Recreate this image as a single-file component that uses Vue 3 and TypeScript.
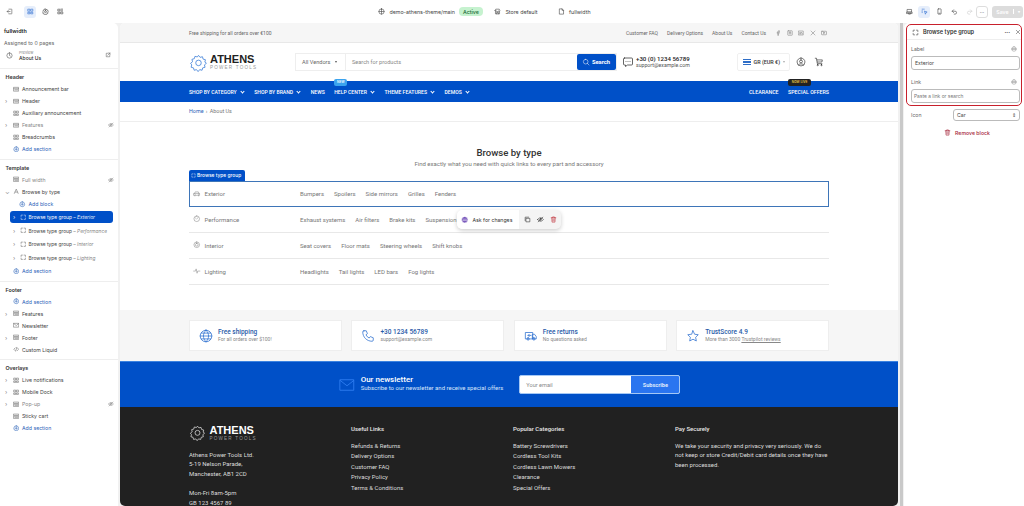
<script setup lang="ts">
type Kind = 'section' | 'add' | 'addBlock' | 'group' | 'open'

interface Row {
  label: string
  icon: string
  kind?: Kind
  chev?: boolean
  hidden?: boolean
  note?: string
  active?: boolean
  muted?: boolean
}

const icons: Record<string, string> = {
  exit: 'M10 4h9a1 1 0 0 1 1 1v14a1 1 0 0 1-1 1h-9M14 12H4M8 8l-4 4 4 4',
  sections: 'M4 4h6v7H4zM14 4h6v7h-6zM4 15h6v5H4zM14 15h6v5h-6z',
  gear: 'M12 3l2 2.5 3-.8.8 3 3 .8-.8 3L22 13l-2.500 2 .8 3-3 .8-.8 3-3-.8-2 2.500-2-2.500-3 .8-.8-3-3-.8.8-3L2 13l2.500-2-.8-3 3-.8.8-3 3 .8zM12 9a3.500 3.500 0 1 0 0 7 3.500 3.500 0 0 0 0-7z',
  apps: 'M4 4h6v6H4zM4 14h6v6H4zM14 14h6v6h-6zM14 3v8M18 3v8',
  theme: 'M12 3a9 9 0 1 0 0 18 9 9 0 0 0 0-18zM12 3v18M3 12h18',
  store: 'M4 9l2-5h12l2 5a3 3 0 0 1-5 1 3 3 0 0 1-6 0 3 3 0 0 1-5-1zM5 12v8h14v-8M9 20v-5h6v5',
  page: 'M6 3h8l5 5v13H6zM14 3v5h5',
  desktop: 'M5 5h14v9H5zM3 14h18v5H3zM9 19v2h6v-2',
  select: 'M4 4h2M9 4h2M4 9v2M4 14v2M13 11l8 3-4 1.500L15.500 20z',
  mobile: 'M8 3h8a1.500 1.500 0 0 1 1.500 1.500v15A1.500 1.500 0 0 1 16 21H8a1.500 1.500 0 0 1-1.500-1.500v-15A1.500 1.500 0 0 1 8 3zM10 18h4',
  undo: 'M9 6L4 11l5 5M4 11h10a5 5 0 0 1 0 10h-3',
  redo: 'M15 6l5 5-5 5M20 11H10a5 5 0 0 0 0 10h3',
  clock: 'M12 3a9 9 0 1 0 0 18 9 9 0 0 0 0-18zM12 7v5l3 2',
  external: 'M11 5H5v14h14v-6M14 4h6v6M20 4l-9 9',
  bar: 'M3 5h18v14H3zM3 10h18M7 14h10',
  stack: 'M3 4h18v5H3zM3 12h18v8H3zM7 16h10',
  type: 'M5 20L12 4l7 16M8 15h8',
  plus: 'M12 3a9 9 0 1 0 0 18 9 9 0 0 0 0-18zM12 8v8M8 12h8',
  corners: 'M4 9V4h5M15 4h5v5M20 15v5h-5M9 20H4v-5',
  code: 'M8 7l-5 5 5 5M16 7l5 5-5 5M14 5l-4 14',
  mail: 'M3 5h18v14H3zM3 6l9 7 9-7',
  eyeOff: 'M2 12s4-6 10-6 10 6 10 6-4 6-10 6-10-6-10-6zM12 9a3 3 0 1 0 0 6 3 3 0 0 0 0-6zM4 20L20 4',
  chat: 'M5 4h14a2 2 0 0 1 2 2v10a2 2 0 0 1-2 2h-8l-4 3v-3H5a2 2 0 0 1-2-2V6a2 2 0 0 1 2-2zM8 11h.01M12 11h.01M16 11h.01',
  search: 'M11 4a7 7 0 1 0 0 14 7 7 0 0 0 0-14zM21 21l-5-5',
  user: 'M12 2.500a9.500 9.500 0 1 0 0 19 9.500 9.500 0 0 0 0-19zM12 7a3.500 3.500 0 1 0 0 7 3.500 3.500 0 0 0 0-7zM6 18.500c1.500-3 10.500-3 12 0',
  cart: 'M3 3h3l2 13h11M7 7h13l-1 5H8M9 18a1.500 1.500 0 1 0 0 3 1.500 1.500 0 0 0 0-3zM18 18a1.500 1.500 0 1 0 0 3 1.500 1.500 0 0 0 0-3z',
  car: 'M5 11l2-5h10l2 5M3 11h18v6H3zM6 17v2M18 17v2M7 14h.01M17 14h.01',
  gauge: 'M12 3a9 9 0 1 0 0 18 9 9 0 0 0 0-18zM12 13l4-5M7 9l1.500 1',
  ring: 'M12 3a9 9 0 1 0 0 18 9 9 0 0 0 0-18zM12 7.500a4.500 4.500 0 1 0 0 9 4.500 4.500 0 0 0 0-9z',
  spark: 'M2 13h6l2-7 3 14 2-7h7',
  copy: 'M8 8h12v12H8zM4 16V4h12',
  trash: 'M4 6h16M9 6V3h6v3M6 6l1 15h10l1-15M10 10v7M14 10v7',
  bot: 'M12 2a10 10 0 1 0 0 20 10 10 0 0 0 0-20zM5 10h14M5 15h14',
  globe: 'M12 2a10 10 0 1 0 0 20 10 10 0 0 0 0-20zM2 12h20M12 2c6 6 6 14 0 20M12 2c-6 6-6 14 0 20M4 7h16M4 17h16',
  phone: 'M5 3h4l2 5-2.500 2a12 12 0 0 0 5.500 5.500l2-2.500 5 2v4a2 2 0 0 1-2 2C10 21 3 14 3 5a2 2 0 0 1 2-2z',
  van: 'M3 6h12v11H3zM15 9h3l3 4v4h-6zM7 15a2 2 0 1 0 0 4 2 2 0 0 0 0-4zM17 15a2 2 0 1 0 0 4 2 2 0 0 0 0-4zM7 11h5M9 9l-2 2 2 2',
  star: 'M12 3l2.800 6 6.200.8-4.500 4.400 1.200 6.300L12 17.500 6.300 20.500l1.200-6.300L3 9.800 9.200 9z',
  close: 'M5 5l14 14M19 5L5 19',
  db: 'M12 3a9 9 0 1 0 0 18 9 9 0 0 0 0-18zM4 10h16M4 14h16',
  facebook: 'M14 21v-8h3l.5-3H14V8c0-1 .5-2 2-2h2V3h-3c-3 0-4 2-4 4v3H8v3h3v8',
  instagram: 'M5 3h14a2 2 0 0 1 2 2v14a2 2 0 0 1-2 2H5a2 2 0 0 1-2-2V5a2 2 0 0 1 2-2zM12 8a4 4 0 1 0 0 8 4 4 0 0 0 0-8z',
  linkedin: 'M3 4h18v16H3zM7 10v6M11 16v-6M11 12c2-3 6-2 6 1v3',
  x: 'M4 4l16 16M20 4L4 20',
  youtube: 'M4 5h16a2 2 0 0 1 2 2v10a2 2 0 0 1-2 2H4a2 2 0 0 1-2-2V7a2 2 0 0 1 2-2zM10 9v6l5-3z',
}

const sidebar: { title: string; rows: Row[] }[] = [
  {
    title: 'Header',
    rows: [
      { label: 'Announcement bar', icon: 'bar' },
      { label: 'Header', icon: 'bar', chev: true },
      { label: 'Auxiliary announcement', icon: 'sections' },
      { label: 'Features', icon: 'bar', chev: true, hidden: true, muted: true },
      { label: 'Breadcrumbs', icon: 'sections' },
      { label: 'Add section', icon: 'plus', kind: 'add' },
    ],
  },
  {
    title: 'Template',
    rows: [
      { label: 'Full width', icon: 'stack', hidden: true, muted: true },
      { label: 'Browse by type', icon: 'type', kind: 'open' },
      { label: 'Add block', icon: 'plus', kind: 'addBlock' },
      { label: 'Browse type group', note: 'Exterior', icon: 'corners', kind: 'group', chev: true, active: true },
      { label: 'Browse type group', note: 'Performance', icon: 'corners', kind: 'group', chev: true },
      { label: 'Browse type group', note: 'Interior', icon: 'corners', kind: 'group', chev: true },
      { label: 'Browse type group', note: 'Lighting', icon: 'corners', kind: 'group', chev: true },
      { label: 'Add section', icon: 'plus', kind: 'add' },
    ],
  },
  {
    title: 'Footer',
    rows: [
      { label: 'Add section', icon: 'plus', kind: 'add' },
      { label: 'Features', icon: 'stack', chev: true },
      { label: 'Newsletter', icon: 'mail' },
      { label: 'Footer', icon: 'stack', chev: true },
      { label: 'Custom Liquid', icon: 'code' },
    ],
  },
  {
    title: 'Overlays',
    rows: [
      { label: 'Live notifications', icon: 'sections', chev: true },
      { label: 'Mobile Dock', icon: 'sections', chev: true },
      { label: 'Pop-up', icon: 'stack', chev: true, hidden: true, muted: true },
      { label: 'Sticky cart', icon: 'stack' },
      { label: 'Add section', icon: 'plus', kind: 'add' },
    ],
  },
]

const topLinks = ['Customer FAQ', 'Delivery Options', 'About Us', 'Contact Us']
const socials = ['facebook', 'instagram', 'linkedin', 'x', 'youtube']
const nav = [
  { label: 'SHOP BY CATEGORY', chev: true },
  { label: 'SHOP BY BRAND', chev: true },
  { label: 'NEWS', chev: false },
  { label: 'HELP CENTER', chev: true, badge: true },
  { label: 'THEME FEATURES', chev: true },
  { label: 'DEMOS', chev: true },
]

const types = [
  { name: 'Exterior', icon: 'car', links: ['Bumpers', 'Spoilers', 'Side mirrors', 'Grilles', 'Fenders'], selected: true },
  { name: 'Performance', icon: 'gauge', links: ['Exhaust systems', 'Air filters', 'Brake kits', 'Suspension'] },
  { name: 'Interior', icon: 'ring', links: ['Seat covers', 'Floor mats', 'Steering wheels', 'Shift knobs'] },
  { name: 'Lighting', icon: 'spark', links: ['Headlights', 'Tail lights', 'LED bars', 'Fog lights'] },
]

const features = [
  { icon: 'globe', title: 'Free shipping', sub: 'For all orders over $100!' },
  { icon: 'phone', title: '+30 1234 56789', sub: 'support@example.com' },
  { icon: 'van', title: 'Free returns', sub: 'No questions asked' },
  { icon: 'star', title: 'TrustScore 4.9', sub: 'More than 3000', link: 'Trustpilot reviews' },
]

const usefulLinks = ['Refunds & Returns', 'Delivery Options', 'Customer FAQ', 'Privacy Policy', 'Terms & Conditions']
const categories = ['Battery Screwdrivers', 'Cordless Tool Kits', 'Cordless Lawn Mowers', 'Clearance', 'Special Offers']
</script>

<template>
  <div class="app">
    <header class="topbar">
      <div class="top-left">
        <svg class="ic tb-exit" viewBox="0 0 24 24"><path :d="icons.exit" /></svg>
        <span class="tb-btn on"><svg class="ic" viewBox="0 0 24 24"><path :d="icons.sections" /></svg></span>
        <span class="tb-btn"><svg class="ic" viewBox="0 0 24 24"><path :d="icons.gear" /></svg></span>
        <span class="tb-btn"><svg class="ic" viewBox="0 0 24 24"><path :d="icons.apps" /></svg></span>
      </div>
      <div class="top-center">
        <svg class="ic" viewBox="0 0 24 24"><path :d="icons.theme" /></svg>
        <span class="theme-name">demo-athens-theme/main</span>
        <span class="pill">Active</span>
        <svg class="ic store-ic" viewBox="0 0 24 24"><path :d="icons.store" /></svg>
        <span>Store default</span>
        <svg class="ic page-ic" viewBox="0 0 24 24"><path :d="icons.page" /></svg>
        <span>fullwidth</span>
      </div>
      <div class="top-right">
        <span class="tb-btn"><svg class="ic" viewBox="0 0 24 24"><path :d="icons.desktop" /></svg></span>
        <span class="tb-btn on"><svg class="ic" viewBox="0 0 24 24"><path :d="icons.select" /></svg></span>
        <span class="tb-btn"><svg class="ic" viewBox="0 0 24 24"><path :d="icons.mobile" /></svg></span>
        <span class="tb-btn"><svg class="ic" viewBox="0 0 24 24"><path :d="icons.undo" /></svg></span>
        <span class="tb-btn faded"><svg class="ic" viewBox="0 0 24 24"><path :d="icons.redo" /></svg></span>
        <span class="more">···</span>
        <span class="save"><span class="save-label">Save</span><span class="save-caret">▾</span></span>
      </div>
    </header>

    <div class="workspace">
      <aside class="left">
        <div class="left-head">
          <div class="tpl-name">fullwidth</div>
          <div class="tpl-sub">Assigned to 0 pages</div>
          <div class="preview-row">
            <svg class="ic" viewBox="0 0 24 24"><path :d="icons.clock" /></svg>
            <div class="preview-text">
              <small>Preview</small>
              <b>About Us</b>
            </div>
            <svg class="ic ext" viewBox="0 0 24 24"><path :d="icons.external" /></svg>
          </div>
        </div>
        <section v-for="sec in sidebar" :key="sec.title" class="side-sec">
          <h4>{{ sec.title }}</h4>
          <div
            v-for="(row, i) in sec.rows"
            :key="i"
            class="side-row"
            :class="[row.kind, { active: row.active, muted: row.muted }]"
          >
            <span class="chev"><template v-if="row.chev">›</template><template v-else-if="row.kind === 'open'">⌄</template></span>
            <svg class="ic" viewBox="0 0 24 24"><path :d="icons[row.icon]" /></svg>
            <span class="row-label">{{ row.label }}<em v-if="row.note"> – {{ row.note }}</em></span>
            <svg v-if="row.hidden" class="ic eye" viewBox="0 0 24 24"><path :d="icons.eyeOff" /></svg>
          </div>
        </section>
      </aside>

      <main class="preview">
        <div class="announce">
          <div class="wrap announce-in">
            <span>Free shipping for all orders over €100</span>
            <div class="announce-right">
              <span v-for="l in topLinks" :key="l">{{ l }}</span>
              <span class="socials">
                <svg v-for="s in socials" :key="s" class="ic" viewBox="0 0 24 24"><path :d="icons[s]" /></svg>
              </span>
            </div>
          </div>
        </div>

        <div class="site-head">
          <div class="wrap head-in">
            <div class="logo">
              <svg class="logo-gear" viewBox="0 0 24 24"><path :d="icons.gear" /></svg>
              <div>
                <div class="logo-name">ATHENS</div>
                <div class="logo-sub">POWER TOOLS</div>
              </div>
            </div>
            <div class="search">
              <div class="vendors">All Vendors <i class="caret"></i></div>
              <span class="search-ph">Search for products</span>
              <span class="search-btn">
                <svg class="ic" viewBox="0 0 24 24"><path :d="icons.search" /></svg>
                Search
              </span>
            </div>
            <svg class="ic chat" viewBox="0 0 24 24"><path :d="icons.chat" /></svg>
            <div class="contact">
              <b>+30 (0) 1234 56789</b>
              <span>support@example.com</span>
            </div>
            <div class="currency">
              <span class="flag"></span>
              <span>GR (EUR €)</span>
              <i class="caret small"></i>
            </div>
            <svg class="ic head-ic" viewBox="0 0 24 24"><path :d="icons.user" /></svg>
            <svg class="ic head-ic" viewBox="0 0 24 24"><path :d="icons.cart" /></svg>
          </div>
        </div>

        <nav class="site-nav">
          <div class="wrap nav-in">
            <span v-for="n in nav" :key="n.label" class="nav-item">
              {{ n.label }}<i v-if="n.chev" class="nav-chev"></i>
              <span v-if="n.badge" class="badge-new">NEW</span>
            </span>
            <span class="nav-spacer"></span>
            <span class="nav-item nav-end">CLEARANCE</span>
            <span class="nav-item nav-end">SPECIAL OFFERS<span class="badge-live">NOW LIVE</span></span>
          </div>
        </nav>

        <div class="crumbs">
          <div class="wrap"><a>Home</a> <span class="sep">›</span> About Us</div>
        </div>

        <section class="browse">
          <div class="wrap">
            <h2>Browse by type</h2>
            <p class="browse-sub">Find exactly what you need with quick links to every part and accessory</p>
            <div class="type-list">
              <div v-for="t in types" :key="t.name" class="type-row" :class="{ selected: t.selected }">
                <span v-if="t.selected" class="sel-tag">
                  <svg class="ic" viewBox="0 0 24 24"><path :d="icons.corners" /></svg>Browse type group
                </span>
                <div class="type-name">
                  <svg class="ic" viewBox="0 0 24 24"><path :d="icons[t.icon]" /></svg>
                  {{ t.name }}
                </div>
                <div class="type-links">
                  <span v-for="l in t.links" :key="l">{{ l }}</span>
                </div>
              </div>
              <div class="float-bar">
                <div class="ask">
                  <svg class="bot" viewBox="0 0 24 24"><path :d="icons.bot" /></svg>
                  Ask for changes
                </div>
                <div class="float-actions">
                  <svg class="ic" viewBox="0 0 24 24"><path :d="icons.copy" /></svg>
                  <svg class="ic" viewBox="0 0 24 24"><path :d="icons.eyeOff" /></svg>
                  <svg class="ic red" viewBox="0 0 24 24"><path :d="icons.trash" /></svg>
                </div>
              </div>
            </div>
          </div>
        </section>

        <section class="features">
          <div class="wrap feature-grid">
            <div v-for="f in features" :key="f.title" class="feature">
              <svg class="ic" viewBox="0 0 24 24"><path :d="icons[f.icon]" /></svg>
              <div>
                <b>{{ f.title }}</b>
                <span>{{ f.sub }} <u v-if="f.link">{{ f.link }}</u></span>
              </div>
            </div>
          </div>
        </section>

        <section class="newsletter">
          <svg class="ic news-ic" viewBox="0 0 24 24"><path :d="icons.mail" /></svg>
          <div class="news-text">
            <b>Our newsletter</b>
            <span>Subscribe to our newsletter and receive special offers</span>
          </div>
          <div class="news-form">
            <span class="news-ph">Your email</span>
            <span class="news-btn">Subscribe</span>
          </div>
        </section>

        <footer class="site-foot">
          <div class="wrap foot-grid">
            <div>
              <div class="logo foot-logo">
                <svg class="logo-gear" viewBox="0 0 24 24"><path :d="icons.gear" /></svg>
                <div>
                  <div class="logo-name">ATHENS</div>
                  <div class="logo-sub">POWER TOOLS</div>
                </div>
              </div>
              <p class="addr">Athens Power Tools Ltd.<br />5-19 Nelson Parade,<br />Manchester, AB1 2CD</p>
              <p class="addr">Mon-Fri 8am-5pm<br />GB 123 4567 89</p>
            </div>
            <div>
              <h5>Useful Links</h5>
              <a v-for="l in usefulLinks" :key="l">{{ l }}</a>
            </div>
            <div>
              <h5>Popular Categories</h5>
              <a v-for="l in categories" :key="l">{{ l }}</a>
            </div>
            <div>
              <h5>Pay Securely</h5>
              <p class="pay">We take your security and privacy very seriously. We do not keep or store Credit/Debit card details once they have been processed.</p>
            </div>
          </div>
        </footer>
      </main>

      <div class="scroll-track"><span></span></div>

      <aside class="right">
        <div class="outlined">
          <div class="panel-title">
            <svg class="ic" viewBox="0 0 24 24"><path :d="icons.corners" /></svg>
            <b>Browse type group</b>
            <span class="dots">···</span>
            <svg class="ic close" viewBox="0 0 24 24"><path :d="icons.close" /></svg>
          </div>
          <div class="field">
            <div class="field-label">Label<svg class="ic" viewBox="0 0 24 24"><path :d="icons.db" /></svg></div>
            <div class="input">Exterior</div>
          </div>
          <div class="field">
            <div class="field-label">Link<svg class="ic" viewBox="0 0 24 24"><path :d="icons.db" /></svg></div>
            <div class="input link">Paste a link or search</div>
          </div>
        </div>
        <div class="icon-row">
          <span>Icon</span>
          <div class="select">Car<span class="updown">⇕</span></div>
        </div>
        <div class="remove">
          <svg class="ic" viewBox="0 0 24 24"><path :d="icons.trash" /></svg>
          Remove block
        </div>
      </aside>
    </div>
  </div>
</template>

<style>
html,
body {
  margin: 0;
  background: #f1f1f1;
  overflow: hidden;
}
</style>

<style scoped>
.app {
  width: 1024px;
  height: 506px;
  display: flex;
  flex-direction: column;
  overflow: hidden;
  font-family: Inter, 'Liberation Sans', sans-serif;
  color: #333;
  font-size: 5.2px;
}

.ic {
  width: 7px;
  height: 7px;
  flex-shrink: 0;
  fill: none;
  stroke: currentColor;
  stroke-width: 2;
  stroke-linecap: round;
  stroke-linejoin: round;
}

/* top bar */
.topbar {
  height: 23px;
  flex-shrink: 0;
  background: #fff;
  display: grid;
  grid-template-columns: 1fr auto 1fr;
  align-items: center;
  padding: 0 1px 0 6px;
  box-sizing: border-box;
}

.top-left {
  display: flex;
  align-items: center;
  gap: 3px;
}

.tb-exit {
  margin-right: 8px;
  color: #555;
}

.tb-btn {
  width: 12px;
  height: 12px;
  border-radius: 3px;
  display: flex;
  align-items: center;
  justify-content: center;
  color: #444;
}

.tb-btn.on {
  background: #e6eefb;
  color: #2a6bd0;
}

.tb-btn.faded {
  color: #ccc;
}

.top-center {
  display: flex;
  align-items: center;
  gap: 4px;
  font-size: 5.3px;
  color: #444;
  transform: translateX(-30px);
}

.pill {
  background: #c6f2cf;
  color: #226b37;
  border-radius: 4px;
  padding: 1.5px 4px;
  font-weight: 500;
}

.store-ic {
  margin-left: 7.5px;
}

.page-ic {
  margin-left: 16.5px;
}

.top-right {
  display: flex;
  justify-content: flex-end;
  align-items: center;
  gap: 3px;
}

.more {
  width: 12px;
  height: 12px;
  border: 0.5px solid #ddd;
  border-radius: 3px;
  box-sizing: border-box;
  display: flex;
  align-items: center;
  justify-content: center;
  margin: 0 1px 0 -2px;
  color: #444;
}

.save {
  width: 31px;
  height: 12px;
  background: #dcdcdc;
  border-radius: 3px;
  color: #fff;
  display: flex;
  align-items: center;
  font-weight: 600;
}

.save-label {
  flex: 1;
  text-align: center;
}

.save-caret {
  width: 9px;
  font-size: 4px;
  text-align: center;
  border-left: 0.5px solid #fff;
}

.workspace {
  flex: 1;
  display: flex;
  min-height: 0;
}

/* left sidebar */
.left {
  width: 118px;
  flex-shrink: 0;
  background: #fff;
  border-top-right-radius: 5px;
  margin-right: 2px;
}

.left-head {
  height: 45px;
  padding: 5px 4px 0;
  box-sizing: border-box;
}

.tpl-name {
  font-weight: 600;
  font-size: 5.4px;
  line-height: 7px;
  color: #222;
}

.tpl-sub {
  margin-top: 4.5px;
  font-size: 5.2px;
  line-height: 7px;
  color: #666;
}

.preview-row {
  margin-top: 3px;
  display: flex;
  align-items: center;
  gap: 6px;
  padding: 0 3px 0 2px;
  color: #555;
}

.preview-text {
  flex: 1;
  display: flex;
  flex-direction: column;
}

.preview-text small {
  font-size: 3.8px;
  line-height: 5px;
  color: #888;
}

.preview-text b {
  font-size: 5px;
  line-height: 6px;
  font-weight: 500;
  color: #333;
}

.ext {
  width: 6px;
  height: 6px;
}

.side-sec {
  border-top: 0.5px solid #eee;
  padding: 3px 0 3.5px;
}

.side-sec h4 {
  margin: 0;
  height: 11px;
  line-height: 11px;
  padding-left: 5.5px;
  font-size: 5.3px;
  font-weight: 600;
  color: #333;
}

.side-row {
  height: 12px;
  display: flex;
  align-items: center;
  color: #444;
  padding-left: 5px;
}

.chev {
  width: 7.5px;
  font-size: 6px;
  line-height: 1;
  color: #888;
  flex-shrink: 0;
}

.side-row .ic {
  margin-right: 3px;
  width: 6.5px;
  height: 6.5px;
  color: #666;
}

.row-label {
  flex: 1;
  white-space: nowrap;
}

.row-label em {
  color: #888;
}

.side-row .ic.eye {
  width: 6px;
  height: 6px;
  margin-right: 4px;
  color: #888;
}

.side-row.muted .row-label {
  color: #888;
}

.side-row.add,
.side-row.addBlock {
  color: #2b62b8;
}

.side-row.add .ic,
.side-row.addBlock .ic {
  color: #2b62b8;
}

.side-row.addBlock {
  height: 13.5px;
  padding-left: 19px;
}

.side-row.addBlock .chev {
  width: 0;
}

.side-row.group {
  height: 12px;
  margin: 0 5px 1.5px 10px;
  padding-left: 3px;
  border-radius: 3px;
  font-size: 4.85px;
}

.side-row.group .chev {
  width: 6.5px;
}

.side-row.group .ic {
  margin-right: 2.5px;
}

.side-row.active {
  background: #0050c8;
  color: #fff;
}

.side-row.active .chev,
.side-row.active .ic,
.side-row.active em {
  color: #e2ebfa;
}

/* preview */
.preview {
  width: 778px;
  flex-shrink: 0;
  background: #fff;
  font-family: Roboto, 'Liberation Sans', sans-serif;
  border-radius: 5px;
  overflow: hidden;
  display: flex;
  flex-direction: column;
}

.wrap {
  width: 640px;
  margin: 0 auto;
}

.announce {
  height: 20px;
  flex-shrink: 0;
  background: #f6f6f6;
  border-bottom: 0.5px solid #e8e8e8;
  box-sizing: border-box;
  color: #666;
  font-size: 5px;
}

.announce-in {
  height: 100%;
  display: flex;
  justify-content: space-between;
  align-items: center;
}

.announce-right {
  display: flex;
  align-items: center;
  gap: 9px;
  margin-right: 2px;
}

.socials {
  display: flex;
  gap: 5.5px;
  color: #777;
}

.socials .ic {
  width: 6px;
  height: 6px;
}

.site-head {
  height: 38px;
  flex-shrink: 0;
}

.head-in {
  height: 100%;
  display: flex;
  align-items: center;
}

.logo {
  width: 106px;
  flex-shrink: 0;
  display: flex;
  align-items: center;
  gap: 2px;
  color: #222;
}

.logo-gear {
  width: 19px;
  height: 19px;
  fill: none;
  stroke: #3b7dd8;
  stroke-width: 1;
}

.logo-name {
  font-family: 'Liberation Sans', sans-serif;
  font-weight: 700;
  font-size: 11px;
  line-height: 11px;
}

.logo-sub {
  font-family: 'Liberation Sans', sans-serif;
  font-size: 4.6px;
  line-height: 5px;
  letter-spacing: 1.2px;
  color: #999;
  white-space: nowrap;
}

.search {
  width: 322px;
  height: 18px;
  flex-shrink: 0;
  border: 0.5px solid #eee;
  box-sizing: border-box;
  display: flex;
  align-items: center;
  font-size: 5.6px;
  color: #777;
}

.vendors {
  width: 50px;
  height: 100%;
  box-sizing: border-box;
  padding-left: 6px;
  display: flex;
  align-items: center;
  gap: 4.5px;
  border-right: 0.5px solid #eee;
  color: #666;
}

.caret {
  width: 0;
  height: 0;
  border-left: 1.8px solid transparent;
  border-right: 1.8px solid transparent;
  border-top: 2px solid #555;
}

.caret.small {
  border-top-color: #aaa;
}

.search-ph {
  flex: 1;
  padding-left: 6px;
  color: #888;
}

.search-btn {
  width: 39px;
  height: 16px;
  margin-right: 0.5px;
  background: #0050c8;
  border-radius: 2px;
  color: #fff;
  font-weight: 700;
  display: flex;
  align-items: center;
  justify-content: center;
  gap: 2px;
  font-size: 5.8px;
}

.search-btn .ic {
  width: 8px;
  height: 8px;
  stroke-width: 1.500;
}

.chat {
  width: 12px;
  height: 12px;
  margin-left: 5px;
  stroke-width: 1.500;
  color: #333;
}

.contact {
  margin-left: 2px;
  flex: 1;
  display: flex;
  flex-direction: column;
  font-size: 5.2px;
  line-height: 6.5px;
  color: #555;
}

.contact b {
  font-size: 6.1px;
  line-height: 7px;
  font-weight: 500;
  color: #222;
}

.currency {
  width: 53px;
  height: 18px;
  border: 0.5px solid #f0f0f0;
  border-radius: 2px;
  box-sizing: border-box;
  display: flex;
  align-items: center;
  padding-left: 5px;
  gap: 3px;
  font-size: 5.4px;
  font-weight: 500;
  color: #333;
  margin-right: 3.5px;
}

.flag {
  width: 8px;
  height: 5.5px;
  background: repeating-linear-gradient(#2f6ec7 0 1px, #fff 1px 1.600px);
}

.head-ic {
  width: 10px;
  height: 10px;
  margin-left: 3px;
  margin-right: 5px;
  stroke-width: 1.600;
  color: #333;
}

.site-nav {
  height: 21px;
  flex-shrink: 0;
  background: #0050c8;
  color: #fff;
  font-size: 5.1px;
  font-weight: 500;
}

.nav-in {
  height: 100%;
  display: flex;
  align-items: center;
  gap: 9.5px;
}

.nav-item {
  position: relative;
  display: flex;
  align-items: center;
  white-space: nowrap;
}

.nav-end {
  font-size: 5.25px;
}

.nav-spacer {
  flex: 1;
}

.nav-chev {
  width: 2px;
  height: 2px;
  margin: -1px 1px 0 4px;
  border-right: 0.7px solid #fff;
  border-bottom: 0.7px solid #fff;
  transform: rotate(45deg);
}

.badge-new,
.badge-live {
  position: absolute;
  top: -9.5px;
  font-size: 3.4px;
  line-height: 6.5px;
  border-radius: 2px;
  text-align: center;
}

.badge-new {
  left: 0;
  width: 13px;
  background: #3ba3ee;
}

.badge-live {
  left: 0;
  width: 23px;
  background: #222;
  color: #f2cf4a;
}

.crumbs {
  height: 20px;
  flex-shrink: 0;
  border-bottom: 0.5px solid #eee;
  box-sizing: border-box;
  line-height: 19px;
  font-size: 5.4px;
  color: #777;
}

.crumbs a {
  color: #2b62b8;
}

.sep {
  margin: 0 1px;
}

.browse {
  height: 188px;
  flex-shrink: 0;
  text-align: left;
}

.browse h2 {
  margin: 24px 0 0;
  text-align: center;
  font-size: 9.6px;
  line-height: 13px;
  font-weight: 500;
  color: #333;
}

.browse-sub {
  margin: 1px 0 0;
  text-align: center;
  font-size: 6px;
  line-height: 8px;
  color: #777;
}

.type-list {
  position: relative;
  margin-top: 12.5px;
}

.type-row {
  position: relative;
  height: 26px;
  display: flex;
  align-items: center;
  border-bottom: 0.5px solid #e8e8e8;
  box-sizing: border-box;
  font-size: 6px;
  color: #777;
}

.type-row.selected {
  border: 1px solid #3e75b8;
}

.sel-tag {
  position: absolute;
  left: -1px;
  top: -12px;
  height: 11.5px;
  width: 56px;
  background: #0050c8;
  color: #fff;
  font-size: 4.9px;
  font-weight: 500;
  font-family: Inter, sans-serif;
  border-radius: 2px 2px 0 0;
  display: flex;
  align-items: center;
  gap: 1px;
  padding-left: 2px;
  box-sizing: border-box;
  white-space: nowrap;
}

.sel-tag .ic {
  width: 5px;
  height: 5px;
}

.type-name {
  width: 111px;
  padding-left: 4px;
  box-sizing: border-box;
  flex-shrink: 0;
  display: flex;
  align-items: center;
  gap: 4px;
}

.type-row.selected .type-name {
  width: 110px;
  padding-left: 3px;
}

.type-name .ic {
  width: 7.5px;
  height: 7.5px;
  stroke-width: 1.500;
}

.type-links {
  display: flex;
  gap: 10px;
}

.float-bar {
  position: absolute;
  left: 268px;
  top: 29.5px;
  width: 104px;
  height: 19px;
  display: flex;
  border-radius: 5px;
  overflow: hidden;
  background: #f4f4f4;
  box-shadow: 0 1.5px 4px rgba(0, 0, 0, 0.2);
  font-family: Inter, sans-serif;
  font-size: 5.2px;
  color: #333;
}

.ask {
  width: 62px;
  background: #fff;
  display: flex;
  align-items: center;
  gap: 4px;
  padding-left: 4px;
  box-sizing: border-box;
}

.bot {
  width: 7.5px;
  height: 7.5px;
  fill: #6a45b5;
  stroke: #fff;
  stroke-width: 2;
}

.float-actions {
  flex: 1;
  display: flex;
  align-items: center;
  justify-content: center;
  gap: 6px;
}

.red {
  color: #c0303a;
}

.features {
  height: 51px;
  flex-shrink: 0;
  background: #f6f6f6;
  display: flex;
  align-items: center;
}

.feature-grid {
  display: grid;
  grid-template-columns: repeat(4, 1fr);
  gap: 9.5px;
}

.feature {
  height: 31px;
  background: #fff;
  border: 0.5px solid #eee;
  box-sizing: border-box;
  display: flex;
  align-items: center;
  gap: 5px;
  padding-left: 9px;
}

.feature .ic {
  width: 14px;
  height: 14px;
  stroke-width: 1.300;
  color: #2b6fd0;
}

.feature div {
  display: flex;
  flex-direction: column;
}

.feature b {
  font-size: 6.5px;
  line-height: 8.5px;
  font-weight: 500;
  color: #2a5ba8;
}

.feature span {
  font-size: 5px;
  line-height: 7px;
  color: #888;
}

.newsletter {
  height: 46px;
  flex-shrink: 0;
  background: #0050c8;
  border-top: 0.5px solid #3b82e0;
  box-sizing: border-box;
  display: flex;
  align-items: center;
  justify-content: center;
  color: #fff;
}

.news-ic {
  width: 18px;
  height: 18px;
  stroke-width: 1.200;
  color: #2f7df0;
  margin-right: 5px;
}

.news-text {
  display: flex;
  flex-direction: column;
  margin: -3px 16px 0 0;
}

.news-text b {
  font-size: 8px;
  line-height: 9px;
  font-weight: 500;
}

.news-text span {
  font-size: 6px;
  line-height: 8px;
  color: #d8e5fa;
}

.news-form {
  width: 161px;
  height: 19px;
  background: #fff;
  border: 0.5px solid #a5c8f5;
  border-radius: 2px;
  box-sizing: border-box;
  display: flex;
  align-items: center;
  overflow: hidden;
  font-size: 5.6px;
}

.news-ph {
  flex: 1;
  padding-left: 6px;
  color: #888;
}

.news-btn {
  width: 48px;
  height: 100%;
  background: #2a75f0;
  font-weight: 700;
  display: flex;
  align-items: center;
  justify-content: center;
  color: #dfe9fb;
}

.site-foot {
  flex: 1;
  background: #212121;
  color: #ddd;
  font-size: 6px;
}

.foot-grid {
  display: grid;
  grid-template-columns: repeat(3, 162px) 1fr;
  padding-top: 17px;
}

.foot-logo {
  color: #fff;
}

.foot-logo .logo-gear {
  width: 17px;
  height: 17px;
  stroke: #e8e8e8;
}

.foot-logo.logo {
  gap: 3.5px;
}

.addr {
  margin: 8.5px 0 0;
  line-height: 9.8px;
}

.addr + .addr {
  margin-top: 9.5px;
}

.foot-grid h5 {
  margin: 0 0 7.5px;
  line-height: 9px;
  font-size: 6px;
  font-weight: 500;
  color: #e8e8e8;
}

.foot-grid a {
  display: block;
  line-height: 10.6px;
}

.pay {
  margin: 0;
  line-height: 9.8px;
  width: 155px;
}

/* right panel */
.scroll-track {
  width: 6px;
  flex-shrink: 0;
  display: flex;
  justify-content: center;
}

.scroll-track span {
  width: 3px;
  height: 100%;
  background: #c9c9c9;
}

.right {
  flex: 1;
  background: #fff;
  border-radius: 5px 0 0 0;
  font-size: 5.2px;
  color: #444;
}

.outlined {
  margin: 1px 2px 0 2px;
  height: 82px;
  box-sizing: border-box;
  border: 1px solid #c8202c;
  border-radius: 5px;
}

.panel-title {
  height: 14px;
  display: flex;
  align-items: center;
  gap: 4px;
  padding: 0 0 0 5px;
  border-bottom: 0.5px solid #eee;
  font-size: 5.6px;
}

.panel-title b {
  flex: 1;
  font-weight: 600;
  color: #333;
}

.dots {
  font-weight: 700;
  margin-right: 1px;
}

.close {
  width: 6px;
  height: 6px;
}

.field {
  padding: 0 1px 0 4px;
}

.field-label {
  height: 12px;
  margin-top: 3px;
  display: flex;
  align-items: center;
  justify-content: space-between;
  padding-right: 3px;
  color: #666;
}

.field-label .ic {
  width: 6px;
  height: 6px;
  color: #888;
}

.input {
  height: 14px;
  margin-top: 1px;
  border: 0.5px solid #bbb;
  border-radius: 3px;
  box-sizing: border-box;
  line-height: 13px;
  padding-left: 3px;
  color: #444;
}

.input.link {
  margin-top: 1px;
  color: #777;
  font-size: 4.9px;
  padding-left: 2px;
}

.field + .field .field-label {
  margin-top: 6px;
}

.icon-row {
  margin-top: 3px;
  height: 12px;
  display: flex;
  align-items: center;
  justify-content: space-between;
  padding: 0 4px 0 7px;
  color: #666;
}

.select {
  width: 67px;
  height: 12px;
  border: 0.5px solid #bbb;
  border-radius: 3px;
  box-sizing: border-box;
  display: flex;
  align-items: center;
  justify-content: space-between;
  padding: 0 3px;
  color: #444;
}

.updown {
  font-size: 5px;
}

.remove {
  margin-top: 8px;
  padding-left: 6px;
  display: flex;
  align-items: center;
  justify-content: center;
  gap: 4px;
  color: #a5263a;
  font-weight: 500;
}
</style>
